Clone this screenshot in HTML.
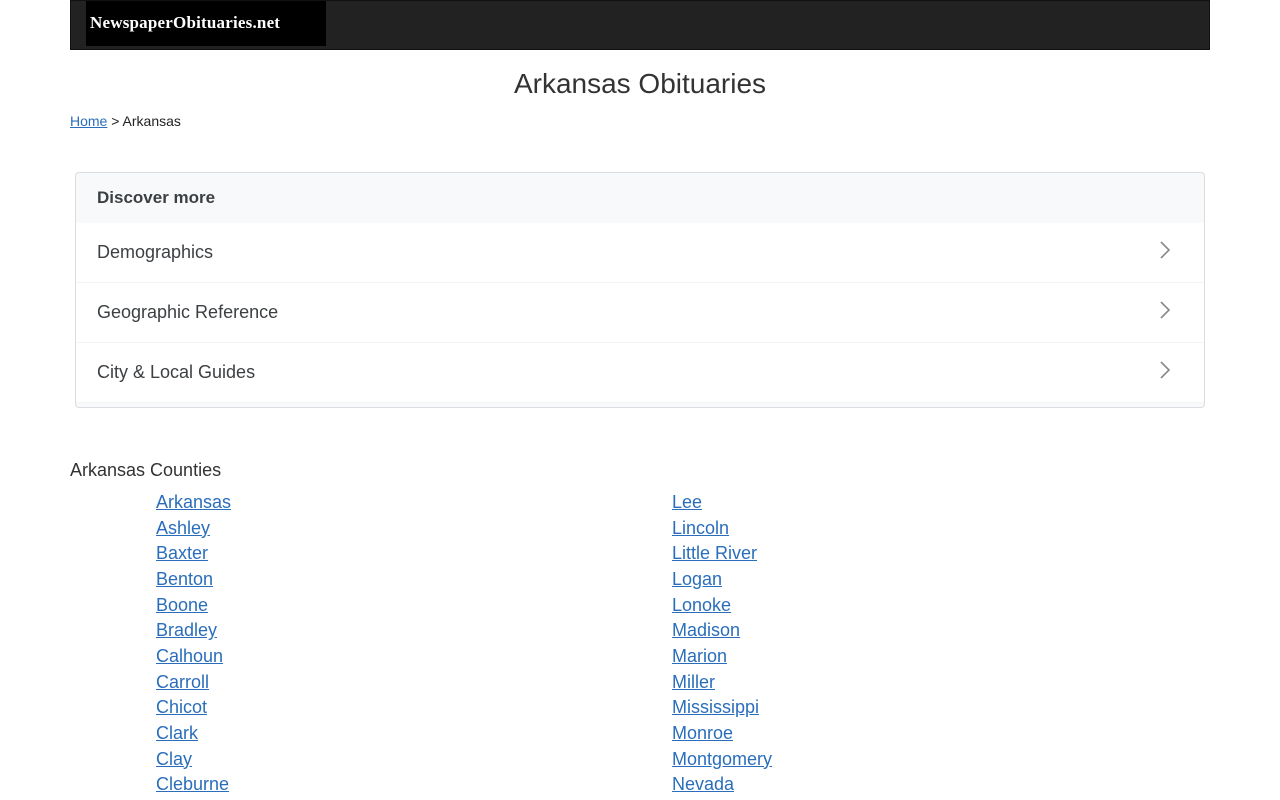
<!DOCTYPE html>
<html><head><meta charset="utf-8"><style>
body{margin:0;background:#fff;font-family:"Liberation Sans",Arial,sans-serif;color:#222;}
.hdr{position:absolute;left:70px;top:0;width:1138px;height:48px;background:#222;border:1px solid #111;}
.logo{position:absolute;left:15px;top:0;width:240px;height:45px;background:#000;color:#fff;font-family:"Liberation Serif",serif;font-weight:bold;font-size:17px;line-height:44px;padding-left:4px;box-sizing:border-box;letter-spacing:0.2px}
h1{position:absolute;top:68px;left:0;width:1280px;text-align:center;margin:0;font-weight:normal;font-size:28px;color:#333;}
.bc{position:absolute;left:70px;top:113px;font-size:14px;}
a{color:#2a6ebb;}
.card{position:absolute;left:75px;top:172px;width:1128px;height:234px;border:1px solid #dadce0;border-radius:4px;overflow:hidden;background:#f8f9fa;}
.ch{height:50px;line-height:50px;padding-left:21px;font-weight:bold;font-size:17px;color:#3c4043;}
.row{height:59px;background:#fff;border-bottom:1px solid #f4f4f4;position:relative;line-height:58px;padding-left:21px;font-size:18px;color:#3c4043;}
.row svg{position:absolute;right:33px;top:18px;}
.ct{position:absolute;left:70px;top:460px;font-size:18px;color:#333;}
.col{position:absolute;top:490px;font-size:18px;line-height:25.65px;}
.col a{display:block;}
</style></head><body>
<div class="hdr"><div class="logo">NewspaperObituaries.net</div></div>
<h1>Arkansas Obituaries</h1>
<div class="bc"><a href="#">Home</a> &gt; Arkansas</div>
<div class="card">
<div class="ch">Discover more</div>
<div class="row">Demographics<svg width="12" height="18" viewBox="0 0 12 18"><path d="M2 1l8 8-8 8" fill="none" stroke="#888" stroke-width="1.6"/></svg></div>
<div class="row">Geographic Reference<svg width="12" height="18" viewBox="0 0 12 18"><path d="M2 1l8 8-8 8" fill="none" stroke="#888" stroke-width="1.6"/></svg></div>
<div class="row">City &amp; Local Guides<svg width="12" height="18" viewBox="0 0 12 18"><path d="M2 1l8 8-8 8" fill="none" stroke="#888" stroke-width="1.6"/></svg></div>
</div>
<div class="ct">Arkansas Counties</div>
<div class="col" style="left:156px"><a href="#">Arkansas</a><a href="#">Ashley</a><a href="#">Baxter</a><a href="#">Benton</a><a href="#">Boone</a><a href="#">Bradley</a><a href="#">Calhoun</a><a href="#">Carroll</a><a href="#">Chicot</a><a href="#">Clark</a><a href="#">Clay</a><a href="#">Cleburne</a></div>
<div class="col" style="left:672px"><a href="#">Lee</a><a href="#">Lincoln</a><a href="#">Little River</a><a href="#">Logan</a><a href="#">Lonoke</a><a href="#">Madison</a><a href="#">Marion</a><a href="#">Miller</a><a href="#">Mississippi</a><a href="#">Monroe</a><a href="#">Montgomery</a><a href="#">Nevada</a></div>
</body></html>
